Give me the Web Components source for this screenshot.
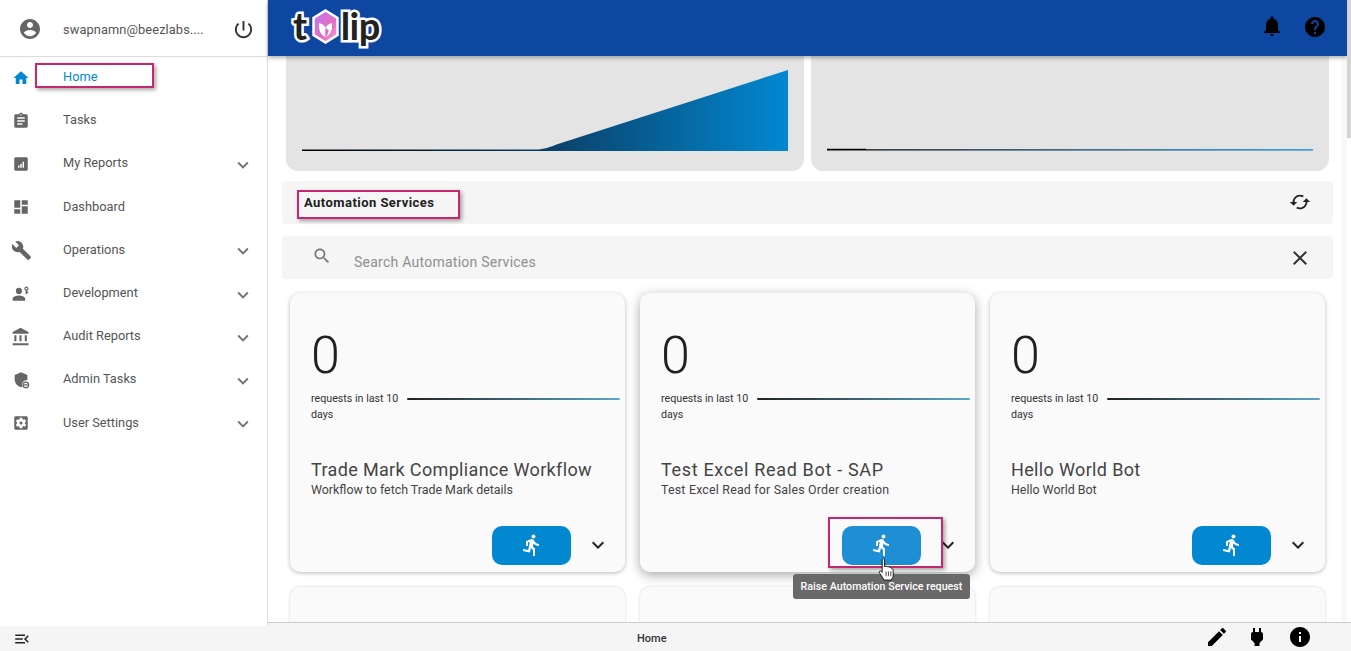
<!DOCTYPE html>
<html lang="en">
<head>
<meta charset="utf-8">
<title>Tulip</title>
<style>
html,body{margin:0;padding:0;height:100%;overflow:hidden;background:#fff;font-family:Roboto,"Liberation Sans",sans-serif}
</style>
</head>
<body>
<app-shell></app-shell>
<script>
const P={
account:'M12 2C6.48 2 2 6.48 2 12s4.48 10 10 10 10-4.48 10-10S17.52 2 12 2zm0 3c1.66 0 3 1.34 3 3s-1.34 3-3 3-3-1.34-3-3 1.34-3 3-3zm0 14.2c-2.5 0-4.71-1.28-6-3.22.03-1.99 4-3.08 6-3.08 1.99 0 5.97 1.09 6 3.08-1.29 1.94-3.5 3.22-6 3.22z',
power:'M13 3h-2v10h2V3zm4.83 2.17l-1.42 1.42C17.99 7.86 19 9.81 19 12c0 3.87-3.13 7-7 7s-7-3.13-7-7c0-2.19 1.01-4.14 2.58-5.42L6.17 5.17C4.23 6.82 3 9.26 3 12c0 4.97 4.03 9 9 9s9-4.03 9-9c0-2.74-1.23-5.18-3.17-6.83z',
home:'M10 20v-6h4v6h5v-8h3L12 3 2 12h3v8z',
tasks:'M19 3h-4.18C14.4 1.84 13.3 1 12 1c-1.3 0-2.4.84-2.82 2H5c-1.1 0-2 .9-2 2v14c0 1.1.9 2 2 2h14c1.1 0 2-.9 2-2V5c0-1.1-.9-2-2-2zm-7 0c.55 0 1 .45 1 1s-.45 1-1 1-1-.45-1-1 .45-1 1-1zm2 14H7v-2h7v2zm3-4H7v-2h10v2zm0-4H7V7h10v2z',
reports:'M19 3H5c-1.1 0-2 .9-2 2v14c0 1.1.9 2 2 2h14c1.1 0 2-.9 2-2V5c0-1.1-.9-2-2-2zM10 17H8v-3h2v3zm3 0h-2v-5h2v5zm3 0h-2V9h2v8z',
dash:'M3 13h8V3H3v10zm0 8h8v-6H3v6zm10 0h8V11h-8v10zm0-18v6h8V3h-8z',
build:'M22.7 19l-9.1-9.1c.9-2.3.4-5-1.5-6.9-2-2-5-2.4-7.4-1.3L9 6 6 9 1.6 4.7C.4 7.1.9 10.1 2.9 12.1c1.9 1.9 4.6 2.4 6.9 1.5l9.1 9.1c.4.4 1 .4 1.4 0l2.3-2.3c.5-.4.5-1.1.1-1.4z',
dev:'M9.5 12a3.7 3.7 0 1 0 0-7.4 3.7 3.7 0 0 0 0 7.4zM2 20v-2.2c0-2.6 5-3.9 7.5-3.9s7.5 1.300 7.500 3.900V20zM18.500 3a2.500 2.500 0 0 0-1 4.800V12h2V10.500h1.200V9h-1.200V7.800a2.500 2.500 0 0 0-1-4.800zm0 1.400a1.100 1.100 0 1 1 0 2.200 1.100 1.100 0 0 1 0-2.200z',
bank:'M4 10v7h2.500v-7H4zm6.200 0v7h2.500v-7h-2.500zM2 22h19v-2.500H2V22zm14.500-12v7H19v-7h-2.500zM11.500 1L2 6v2h19V6l-9.500-5z',
admin:'M12 1.500L3.500 5.200v5.600c0 5 3.400 9.700 8.500 11 .7-.2 1.300-.4 1.900-.8a6 6 0 0 1 6.400-8.700c.1-.5.200-1 .2-1.500V5.200L12 1.500zM18.500 14a4.500 4.500 0 1 0 0 9 4.500 4.500 0 0 0 0-9zm0 1.500a3 3 0 0 1 2.900 2.300h-5.800a3 3 0 0 1 2.900-2.300zm-2.900 3.700h5.800a3 3 0 0 1-5.800 0z',
settings:'M12 10c-1.100 0-2 .9-2 2s.9 2 2 2 2-.9 2-2-.9-2-2-2zm7-7H5c-1.110 0-2 .9-2 2v14c0 1.100.89 2 2 2h14c1.110 0 2-.9 2-2V5c0-1.100-.89-2-2-2zm-1.750 9c0 .23-.02.46-.05.68l1.480 1.160c.13.110.17.3.08.45l-1.400 2.420c-.09.15-.27.21-.43.15l-1.740-.7c-.36.28-.76.51-1.180.69l-.26 1.850c-.03.17-.18.3-.35.3h-2.800c-.17 0-.32-.13-.35-.29l-.26-1.850c-.43-.18-.82-.41-1.180-.69l-1.740.7c-.16.06-.34 0-.43-.15l-1.400-2.420c-.09-.15-.05-.34.08-.45l1.480-1.160c-.03-.23-.05-.46-.05-.69 0-.23.02-.46.05-.68l-1.480-1.160c-.13-.11-.17-.3-.08-.45l1.400-2.420c.09-.15.27-.21.43-.15l1.740.7c.36-.28.76-.51 1.180-.69l.26-1.850c.03-.17.18-.3.35-.3h2.800c.17 0 .32.13.35.29l.26 1.850c.43.18.82.41 1.180.69l1.740-.7c.16-.06.34 0 .43.15l1.400 2.420c.09.15.05.34-.08.45l-1.480 1.160c.03.23.05.46.05.69z',
more:'M16.590 8.590L12 13.170 7.410 8.590 6 10l6 6 6-6z',
bell:'M12 22c1.100 0 2-.9 2-2h-4c0 1.100.89 2 2 2zm6-6v-5c0-3.070-1.640-5.640-4.500-6.320V4c0-.83-.67-1.500-1.500-1.500s-1.500.67-1.500 1.500v.68C7.630 5.360 6 7.920 6 11v5l-2 2v1h16v-1l-2-2z',
help:'M12 2C6.480 2 2 6.480 2 12s4.480 10 10 10 10-4.480 10-10S17.520 2 12 2zm1 17h-2v-2h2v2zm2.070-7.750l-.9.92C13.450 12.900 13 13.500 13 15h-2v-.5c0-1.100.45-2.100 1.170-2.830l1.240-1.260c.37-.36.59-.86.59-1.410 0-1.100-.9-2-2-2s-2 .9-2 2H8c0-2.210 1.790-4 4-4s4 1.790 4 4c0 .88-.36 1.680-.93 2.250z',
search:'M15.500 14h-.79l-.28-.27C15.410 12.590 16 11.110 16 9.500 16 5.910 13.090 3 9.500 3S3 5.910 3 9.500 5.910 16 9.500 16c1.610 0 3.090-.59 4.230-1.570l.27.28v.79l5 4.990L20.490 19l-4.990-5zm-6 0C7.010 14 5 11.990 5 9.500S7.010 5 9.500 5 14 7.010 14 9.500 11.990 14 9.500 14z',
close:'M19 6.410L17.590 5 12 10.590 6.410 5 5 6.410 10.590 12 5 17.590 6.410 19 12 13.410 17.590 19 19 17.590 13.410 12z',
cached:'M19 8l-4 4h3c0 3.310-2.690 6-6 6-1.010 0-1.970-.25-2.800-.7l-1.460 1.460C8.970 19.540 10.430 20 12 20c4.420 0 8-3.580 8-8h3l-4-4zM6 12c0-3.310 2.690-6 6-6 1.010 0 1.970.25 2.800.7l1.460-1.460C15.030 4.460 13.570 4 12 4c-4.420 0-8 3.580-8 8H1l4 4 4-4H6z',
run:'M13.490 5.480c1.100 0 2-.9 2-2s-.9-2-2-2-2 .9-2 2 .9 2 2 2zm-3.600 13.900l1-4.400 2.100 2v6h2v-7.500l-2.100-2 .6-3c1.300 1.500 3.300 2.500 5.500 2.500v-2c-1.900 0-3.500-1-4.300-2.400l-1-1.600c-.4-.6-1-1-1.700-1-.3 0-.5.1-.8.1l-5.200 2.200v4.700h2v-3.400l1.800-.7-1.600 8.100-4.900-1-.4 2 7 1.400z',
edit:'M3 17.250V21h3.750L17.810 9.940l-3.750-3.750L3 17.250zM20.710 7.040c.39-.39.39-1.020 0-1.410l-2.340-2.340c-.39-.39-1.020-.39-1.410 0l-1.830 1.830 3.750 3.750 1.830-1.830z',
plug:'M16.010 7L16 3h-2v4h-4V3H8v4h-.01C7 6.990 6 7.990 6 8.990v5.490L9.500 18v3h5v-3l3.500-3.510v-5.500c0-1-1-2-1.990-1.990z',
info:'M12 2C6.480 2 2 6.480 2 12s4.480 10 10 10 10-4.480 10-10S17.520 2 12 2zm1 15h-2v-6h2v6zm0-8h-2V7h2v2z',
menuopen:'M3 18h13v-2H3v2zm0-5h10v-2H3v2zm0-7v2h13V6H3zm18 9.590L17.420 12 21 8.410 19.590 7l-5 5 5 5L21 15.590z'
};
function def(name,css,html,extra){
  customElements.define(name,class extends HTMLElement{
    connectedCallback(){
      if(this.shadowRoot)return;
      const s=this.attachShadow({mode:'open'});
      s.innerHTML='<style>'+css+'</style>'+(typeof html==='function'?html(this):html);
      if(extra)extra(this,s);
    }
  });
}
def('ui-icon',':host{display:inline-flex;flex:none;width:var(--s,24px);height:var(--s,24px);color:inherit}svg{width:100%;height:100%;display:block;fill:currentColor}',
  h=>`<svg viewBox="0 0 24 24" aria-hidden="true"><path d="${P[h.getAttribute('name')]}"/></svg>`);

def('mark-box',`:host{position:absolute;box-sizing:border-box;border:2px solid #c4286f;box-shadow:2px 2px 4px rgba(0,0,0,.35);pointer-events:none;z-index:5}`,'');

def('nav-item',`:host{display:flex;align-items:center;height:43.200px;color:#555;font-size:12.800px}
  .ic{width:42px;display:flex;justify-content:center;color:#666}
  :host([active]){color:#0288d1}:host([active]) .ic{color:#0288d1}
  .t{margin:-2px 0 0 21px;flex:1}
  .c{margin:2px 13px 0 0;color:#757575;display:flex}`,
  h=>`<span class="ic"><ui-icon name="${h.getAttribute('icon')}" style="--s:${h.getAttribute('size')||'18px'}"></ui-icon></span><span class="t">${h.getAttribute('label')}</span>${h.hasAttribute('expand')?'<span class="c"><ui-icon name="more" style="--s:22px"></ui-icon></span>':''}`);

def('side-nav',`:host{display:flex;flex-direction:column;flex:1;min-height:0;border-right:1px solid #ddd;position:relative;background:#fff}
  .user{border-bottom:1px solid #ddd;display:flex;align-items:center;flex:none;font-size:12.800px;color:#555;padding-top:3px;box-sizing:border-box;height:57px}
  .av{margin-left:18px;color:#666;margin-top:-2px}.n{margin-left:21px;width:152px;letter-spacing:.1px}
  .pw{margin-left:17px;color:#333}
  .items{margin-top:-1px}
  mark-box{left:35px;top:63px;width:119px;height:25px}`,
  `<div class="user"><ui-icon class="av" name="account" style="--s:24px"></ui-icon><span class="n">swapnamn@beezlabs....</span><ui-icon class="pw" name="power" style="--s:23px"></ui-icon></div>
  <div class="items">
  <nav-item active icon="home" label="Home"></nav-item>
  <nav-item icon="tasks" label="Tasks"></nav-item>
  <nav-item icon="reports" label="My Reports" expand></nav-item>
  <nav-item icon="dash" label="Dashboard"></nav-item>
  <nav-item icon="build" label="Operations" expand size="21px"></nav-item>
  <nav-item icon="dev" label="Development" expand size="20px"></nav-item>
  <nav-item icon="bank" label="Audit Reports" expand size="20px"></nav-item>
  <nav-item icon="admin" label="Admin Tasks" expand size="18px"></nav-item>
  <nav-item icon="settings" label="User Settings" expand></nav-item>
  </div><mark-box></mark-box>`);

def('tulip-logo',`:host{display:inline-flex;align-items:center;height:56px;margin:-6px 0 0 1px;font:700 38px/1 Lato,"Open Sans",sans-serif;color:#222;letter-spacing:-.5px}
  span{-webkit-text-stroke:5px #fff;paint-order:stroke fill}
  svg{width:27px;height:35px;margin:3px 0 0 5px;flex:none}`,
  `<span>t</span><svg viewBox="0 0 27 35"><defs><linearGradient id="g" x1="0" y1="0" x2="1" y2="1"><stop offset="0" stop-color="#b57af0"/><stop offset=".6" stop-color="#e86cc4"/><stop offset="1" stop-color="#f5a6d8"/></linearGradient></defs><path d="M13.500 1.500L25.500 9V26L13.500 33.500 1.500 26V9z" fill="url(#g)" stroke="#fff" stroke-width="2.500"/><path d="M7 14c3 1 5.500 2 6.500 5 1-3 3.500-4 6.500-5 .5 7-1.500 12-6.500 14C8.500 26 6.500 21 7 14z" fill="#fff"/><path d="M13.500 19c-.5 3-.5 6 0 9 1.500-1 2.800-3.500 3.200-7z" fill="#e86cc4"/></svg><span style="margin-left:2px">lip</span>`);

def('top-bar',`:host{display:flex;align-items:center;height:56px;flex:none;background:#0d47a1;box-shadow:0 2px 4px rgba(0,0,0,.3);position:relative;z-index:3;padding-left:24px;color:#000}
  .sp{flex:1}.b{margin:-4px 19px 0 0}.h{margin:-3px 20px 0 0}`,
  `<tulip-logo></tulip-logo><span class="sp"></span><ui-icon class="b" name="bell"></ui-icon><ui-icon class="h" name="help"></ui-icon>`);

def('chart-card',`:host{display:block;flex:1;height:115px;background:#e4e4e4;border-radius:0 0 12px 12px}svg{display:block;width:100%;height:100%}`,
  h=>{const id=h.getAttribute('gid');return `<svg viewBox="0 0 518 115" preserveAspectRatio="none"><defs><linearGradient id="${id}" gradientUnits="userSpaceOnUse" x1="16" y1="0" x2="502" y2="0"><stop offset="0" stop-color="#000"/><stop offset=".5" stop-color="#0a3f66"/><stop offset="1" stop-color="#0288d1"/></linearGradient></defs><path d="${h.getAttribute('d')}" fill="url(#${id})"/></svg>`});

def('section-bar',`:host{display:flex;align-items:center;height:43px;background:#f5f5f5;border-radius:4px;padding:0 22px;position:relative;color:#212121;font-size:13px;font-weight:700;letter-spacing:.45px}
  span{flex:1;margin-top:-1px}ui-icon{color:#222;margin-top:-1px}
  mark-box{left:15px;top:9px;width:163px;height:29px}`,
  `<span>Automation Services</span><ui-icon name="cached" style="--s:22px"></ui-icon><mark-box></mark-box>`);

def('search-bar',`:host{display:flex;align-items:center;height:43px;background:#f5f5f5;border-radius:4px;padding:0 21px 0 30px;color:#757575;font-size:14px;letter-spacing:.25px}
  .t{flex:1;margin:8px 0 0 22px;color:#8f8f8f}
  .s{margin-top:-4px;color:#777}.x{color:#333}`,
  `<ui-icon class="s" name="search" style="--s:20px"></ui-icon><span class="t">Search Automation Services</span><ui-icon class="x" name="close" style="--s:24px"></ui-icon>`);

def('service-card',`:host{display:block;box-sizing:border-box;height:279px;background:#fafafa;border-radius:10px;box-shadow:0 1px 4px rgba(0,0,0,.28);padding:0 5px 0 21px;position:relative;color:#212121}
  :host([raised]){box-shadow:0 3px 12px rgba(0,0,0,.35)}
  :host([raised]) button{background:#1e8fd5}
  :host([raised]) .title{letter-spacing:.67px}
  :host([raised]) .sub{letter-spacing:.2px}
  :host([empty]){box-shadow:0 0 3px rgba(0,0,0,.18)}
  .num{font-size:52px;font-weight:300;line-height:56px;margin-top:35px}
  .row{display:flex;margin-top:7px;font-size:10.700px;line-height:16px;height:32px;color:#333}
  .cap{width:96px;flex:none}
  .line{flex:1;height:2px;margin-top:7px;background:linear-gradient(90deg,#222,#5aa7c9);border-radius:1px}
  .title{margin-top:35px;font-size:18px;line-height:24px;letter-spacing:.35px;color:#444;font-weight:400}
  .sub{font-size:12.400px;line-height:16px;color:#444}
  .foot{position:absolute;left:0;right:0;top:233px;height:39px;}
  .act{display:flex;align-items:center;justify-content:flex-end;padding-right:15px;gap:15px}
  button{all:unset;width:79px;height:39px;border-radius:10px;background:#0288d1;color:#fff;display:flex;align-items:center;justify-content:center}
  button ui-icon{margin:-2px 0 0 0}
  .c{color:#222;margin-top:-2px}`,
  h=>h.hasAttribute('empty')?'':`<div class="num">0</div><div class="row"><span class="cap">requests in last 10 days</span><span class="line"></span></div>
  <div class="title">${h.getAttribute('title')}</div><div class="sub">${h.getAttribute('sub')}</div>
  <div class="foot act"><button><ui-icon name="run" style="--s:24px"></ui-icon></button><ui-icon class="c" name="more" style="--s:24px"></ui-icon></div>`);

def('hover-tip',`:host{position:absolute;left:525px;top:518px;width:177px;height:25px;box-sizing:border-box;background:#696969;border-radius:3px;color:#fff;font-size:10.700px;font-weight:500;display:flex;align-items:center;justify-content:center;white-space:nowrap;z-index:6}`,`<slot></slot>`);

def('hand-cursor',`:host{position:absolute;left:610px;top:502px;width:17px;height:24px;z-index:7}svg{display:block;width:100%;height:100%}`,
  `<svg viewBox="0 0 17 25"><path d="M4 1.500c0-1 2.500-1 2.500 0V9l1.500-.5c1-.2 1.500.3 1.800.8 1-.5 1.700-.1 2 .5 1-.3 1.900.2 2 1 .7.2 1.700.7 1.700 2v5.200c0 2-1 3-2 5H6c-1-2-3-4.500-4.500-7-.8-1.300-.5-2.500.6-2.500.8 0 1.400.8 1.900 1.500z" fill="#fff" stroke="#111" stroke-width="1"/><path d="M8 14v5M10.500 14v5M13 14v5" stroke="#111" stroke-width=".8" fill="none"/></svg>`);

def('content-area',`:host{display:block;flex:1;min-height:0;overflow:hidden;position:relative;background:linear-gradient(90deg,#fff calc(100% - 6px),#f8f8f8 0);padding:0 14px}
  .charts{display:flex;gap:7px;margin:0 4px}
  .sec{margin-top:10px}.srch{margin-top:12px}
  .grid{display:grid;grid-template-columns:repeat(3,335px);gap:15px;margin:14px 0 0 8px}
  mark-box{left:560px;top:461px;width:115px;height:51px}`,
  `<div class="charts">
    <chart-card gid="g1" d="M16 93.500H250C258 93.500 264 91 272 88L502 14V95H16Z"></chart-card>
    <chart-card gid="g2" d="M16 92.700H55V94.500H16ZM55 93.200H502V94.500H55Z"></chart-card>
  </div>
  <section-bar class="sec"></section-bar>
  <search-bar class="srch"></search-bar>
  <div class="grid">
    <service-card title="Trade Mark Compliance Workflow" sub="Workflow to fetch Trade Mark details"></service-card>
    <service-card raised title="Test Excel Read Bot - SAP" sub="Test Excel Read for Sales Order creation"></service-card>
    <service-card title="Hello World Bot" sub="Hello World Bot"></service-card>
    <service-card empty></service-card><service-card empty></service-card><service-card empty></service-card>
  </div>
  <mark-box></mark-box>
  <hover-tip>Raise Automation Service request</hover-tip>
  <hand-cursor></hand-cursor>`);

def('status-bar',`:host{display:flex;align-items:center;height:29px;box-sizing:border-box;flex:none;background:#f5f5f5;border-top:1px solid #ccc;font-size:11px;font-weight:500;color:#333;position:relative;z-index:3;padding-right:39px}
  .h{margin:3px 0 0 369px;flex:1}.i{color:#000}.i+.i{margin-left:16px}.i+.i+.i{margin-left:19px}`,
  `<span class="h">Home</span><ui-icon class="i" name="edit"></ui-icon><ui-icon class="i" name="plug"></ui-icon><ui-icon class="i" name="info"></ui-icon>`);

def('scroll-track',`:host{display:block;width:4px;flex:none;background:#fff;position:relative;z-index:4}
  i{display:block;height:138px;background:#d4d4d4}`,`<i></i>`);

def('app-shell',`:host{display:flex;width:1351px;height:651px;overflow:hidden}
  .left{width:268px;flex:none;display:flex;flex-direction:column}
  .lb{height:25px;flex:none;background:#f5f5f5;display:flex;align-items:center;padding-left:13px;color:#222}
  .right{flex:1;min-width:0;display:flex;flex-direction:column}
  .mid{flex:1;min-height:0;display:flex}
  .col{flex:1;min-width:0;display:flex;flex-direction:column}`,
  `<div class="left"><side-nav></side-nav><div class="lb"><ui-icon name="menuopen" style="--s:18px"></ui-icon></div></div>
  <div class="right"><div class="mid"><div class="col"><top-bar></top-bar><content-area></content-area></div><scroll-track></scroll-track></div><status-bar></status-bar></div>`);
</script>
</body>
</html>
